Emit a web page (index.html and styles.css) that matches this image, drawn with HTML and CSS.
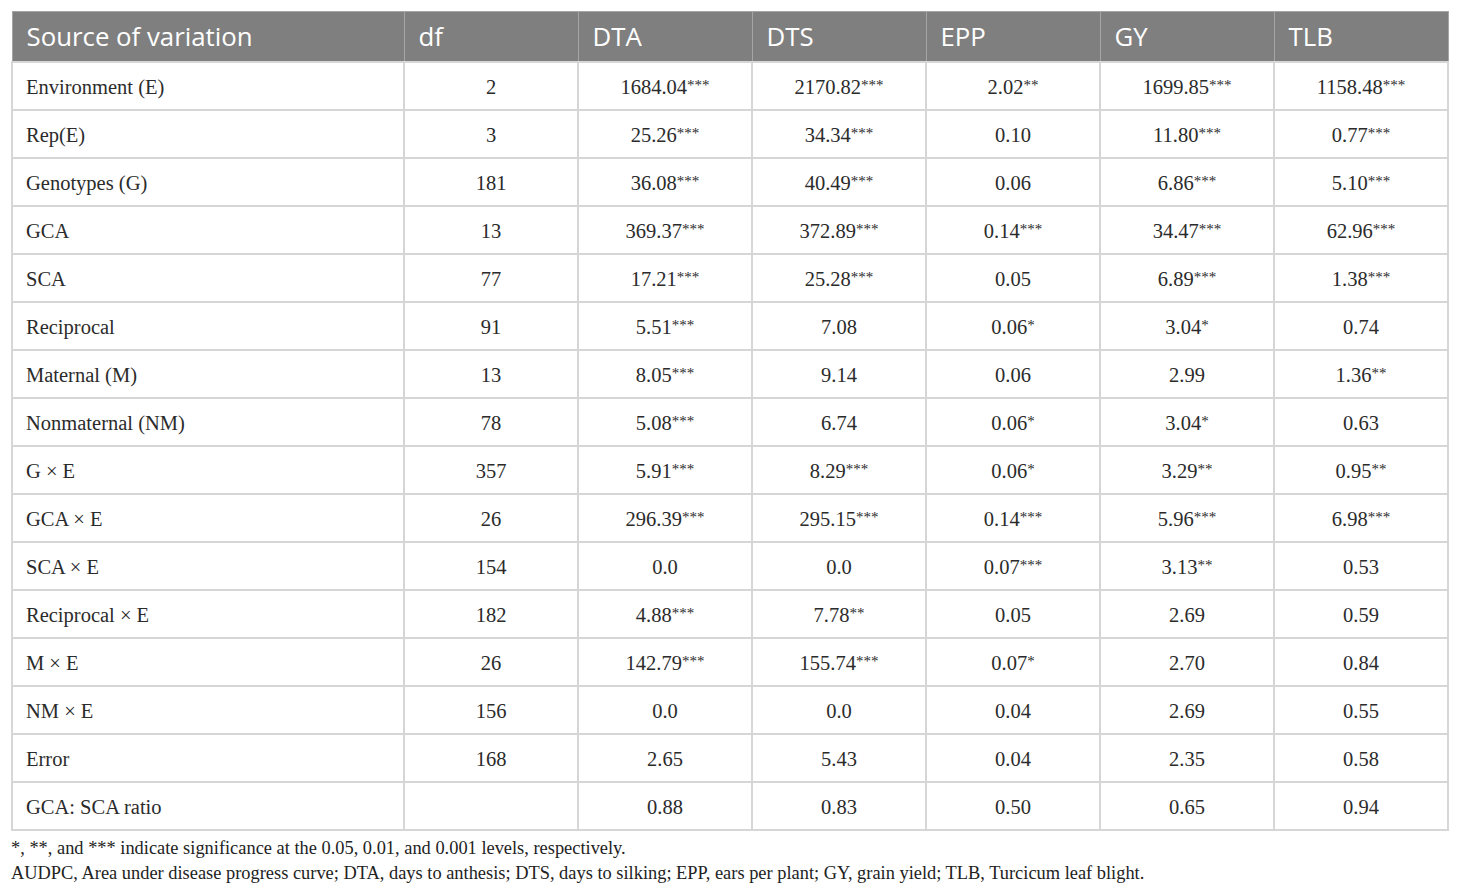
FILE: index.html
```html
<!DOCTYPE html>
<html>
<head>
<meta charset="utf-8">
<link rel="stylesheet" href="styles.css">
</head>
<body>
<table class="anova">
  <thead>
    <tr>
      <th class="c-src">Source of variation</th>
      <th>df</th>
      <th>DTA</th>
      <th>DTS</th>
      <th>EPP</th>
      <th>GY</th>
      <th>TLB</th>
    </tr>
  </thead>
  <tbody>
    <tr><td class="c-src">Environment (E)</td><td>2</td><td>1684.04<sup>***</sup></td><td>2170.82<sup>***</sup></td><td>2.02<sup>**</sup></td><td>1699.85<sup>***</sup></td><td>1158.48<sup>***</sup></td></tr>
    <tr><td class="c-src">Rep(E)</td><td>3</td><td>25.26<sup>***</sup></td><td>34.34<sup>***</sup></td><td>0.10</td><td>11.80<sup>***</sup></td><td>0.77<sup>***</sup></td></tr>
    <tr><td class="c-src">Genotypes (G)</td><td>181</td><td>36.08<sup>***</sup></td><td>40.49<sup>***</sup></td><td>0.06</td><td>6.86<sup>***</sup></td><td>5.10<sup>***</sup></td></tr>
    <tr><td class="c-src">GCA</td><td>13</td><td>369.37<sup>***</sup></td><td>372.89<sup>***</sup></td><td>0.14<sup>***</sup></td><td>34.47<sup>***</sup></td><td>62.96<sup>***</sup></td></tr>
    <tr><td class="c-src">SCA</td><td>77</td><td>17.21<sup>***</sup></td><td>25.28<sup>***</sup></td><td>0.05</td><td>6.89<sup>***</sup></td><td>1.38<sup>***</sup></td></tr>
    <tr><td class="c-src">Reciprocal</td><td>91</td><td>5.51<sup>***</sup></td><td>7.08</td><td>0.06<sup>*</sup></td><td>3.04<sup>*</sup></td><td>0.74</td></tr>
    <tr><td class="c-src">Maternal (M)</td><td>13</td><td>8.05<sup>***</sup></td><td>9.14</td><td>0.06</td><td>2.99</td><td>1.36<sup>**</sup></td></tr>
    <tr><td class="c-src">Nonmaternal (NM)</td><td>78</td><td>5.08<sup>***</sup></td><td>6.74</td><td>0.06<sup>*</sup></td><td>3.04<sup>*</sup></td><td>0.63</td></tr>
    <tr><td class="c-src">G × E</td><td>357</td><td>5.91<sup>***</sup></td><td>8.29<sup>***</sup></td><td>0.06<sup>*</sup></td><td>3.29<sup>**</sup></td><td>0.95<sup>**</sup></td></tr>
    <tr><td class="c-src">GCA × E</td><td>26</td><td>296.39<sup>***</sup></td><td>295.15<sup>***</sup></td><td>0.14<sup>***</sup></td><td>5.96<sup>***</sup></td><td>6.98<sup>***</sup></td></tr>
    <tr><td class="c-src">SCA × E</td><td>154</td><td>0.0</td><td>0.0</td><td>0.07<sup>***</sup></td><td>3.13<sup>**</sup></td><td>0.53</td></tr>
    <tr><td class="c-src">Reciprocal × E</td><td>182</td><td>4.88<sup>***</sup></td><td>7.78<sup>**</sup></td><td>0.05</td><td>2.69</td><td>0.59</td></tr>
    <tr><td class="c-src">M × E</td><td>26</td><td>142.79<sup>***</sup></td><td>155.74<sup>***</sup></td><td>0.07<sup>*</sup></td><td>2.70</td><td>0.84</td></tr>
    <tr><td class="c-src">NM × E</td><td>156</td><td>0.0</td><td>0.0</td><td>0.04</td><td>2.69</td><td>0.55</td></tr>
    <tr><td class="c-src">Error</td><td>168</td><td>2.65</td><td>5.43</td><td>0.04</td><td>2.35</td><td>0.58</td></tr>
    <tr><td class="c-src">GCA: SCA ratio</td><td></td><td>0.88</td><td>0.83</td><td>0.50</td><td>0.65</td><td>0.94</td></tr>
  </tbody>
</table>
<div class="notes">
  <p>*, **, and *** indicate significance at the 0.05, 0.01, and 0.001 levels, respectively.</p>
  <p>AUDPC, Area under disease progress curve; DTA, days to anthesis; DTS, days to silking; EPP, ears per plant; GY, grain yield; TLB, Turcicum leaf blight.</p>
</div>
</body>
</html>
```

FILE: styles.css
```css
html, body {
  margin: 0;
  background: #ffffff;
}
body {
  padding: 11px 12px 0 11px;
  font-family: "Liberation Serif", "Times New Roman", serif;
  color: #2b2b2b;
}
.anova {
  border-collapse: collapse;
  width: 1437px;
  table-layout: fixed;
}
.anova th {
  background: #7f7f7f;
  color: #ffffff;
  font-family: "Open Sans", "Noto Sans", sans-serif;
  font-weight: 400;
  font-size: 25.8px;
  text-align: left;
  height: 50px;
  padding: 0 0 0 14px;
  border: 1px solid #a5a5a5;
  box-sizing: border-box;
  width: 174px;
}
.anova th.c-src {
  width: 392px;
}
.anova td {
  height: 48px;
  box-sizing: border-box;
  padding: 3px 0 0 0;
  border: 2px solid #d6d6d6;
  text-align: center;
  font-size: 20.5px;
  color: #2b2b2b;
}
.anova td.c-src {
  text-align: left;
  padding-left: 13px;
}
.anova sup {
  font-size: 15px;
  vertical-align: 4px;
  line-height: 0;
}
.notes {
  padding-top: 5px;
}
.notes p {
  margin: 0;
  font-size: 18.4px;
  line-height: 25px;
  color: #222222;
}
```
